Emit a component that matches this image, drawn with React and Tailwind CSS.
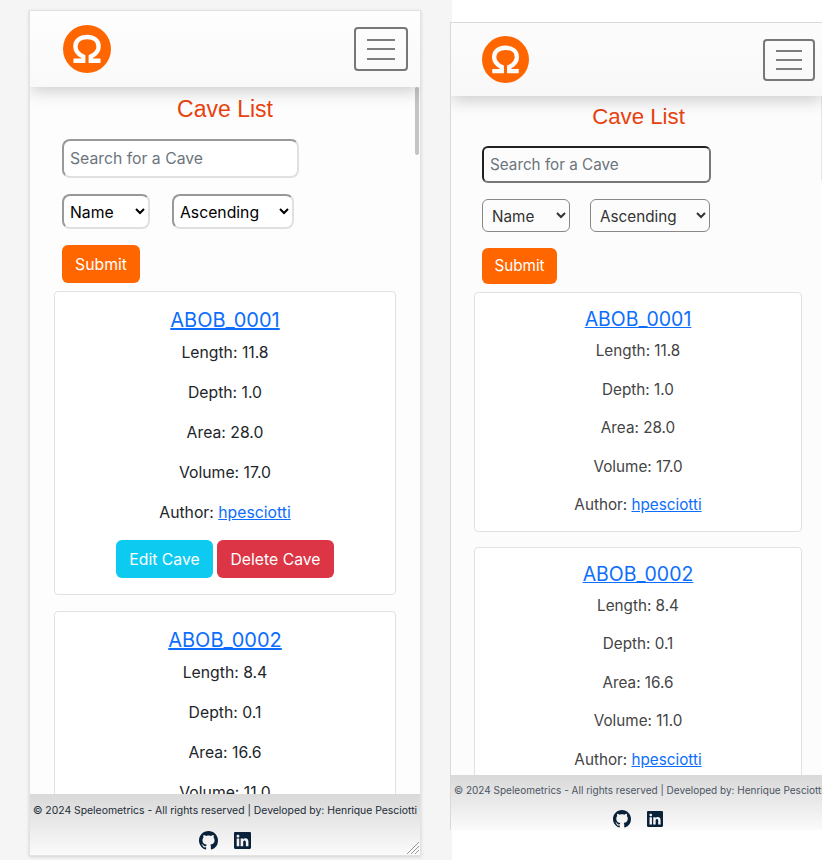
import React from "react";
import { BsGithub, BsLinkedin } from "react-icons/bs";

function Logo({ cls }) {
  return (
    <svg className={cls} viewBox="0 0 48 48" aria-label="Logo">
      <circle cx="24" cy="24" r="24" fill="#ff6600" />
      <path
        d="M10.5 35.8H20.2V31.6C14.8 29 12.4 25.4 12.4 21.4C12.4 15.6 17.2 12 24 12C30.8 12 35.6 15.6 35.6 21.4C35.6 25.4 33.2 29 27.8 31.6V35.8H37.5"
        fill="none"
        stroke="#ffffff"
        strokeWidth="4.4"
      />
    </svg>
  );
}

function Burger({ cls, lines }) {
  return (
    <div className={`flex flex-col items-center justify-center rounded-[4px] border-2 border-[#777777] ${cls}`}>
      <span className={`block h-[2px] bg-[#7d7d7d] ${lines}`} />
      <span className={`block h-[2px] bg-[#7d7d7d] ${lines}`} />
      <span className={`block h-[2px] bg-[#7d7d7d] ${lines}`} />
    </div>
  );
}

function Stats({ c, p }) {
  return (
    <>
      <p className={p}>Length: {c.length}</p>
      <p className={p}>Depth: {c.depth}</p>
      <p className={p}>Area: {c.area}</p>
      <p className={p}>Volume: {c.volume}</p>
      <p className={p}>
        Author: <a href="#" className="text-[#0d6efd] underline">hpesciotti</a>
      </p>
    </>
  );
}

const caves = [
  { name: "ABOB_0001", length: "11.8", depth: "1.0", area: "28.0", volume: "17.0" },
  { name: "ABOB_0002", length: "8.4", depth: "0.1", area: "16.6", volume: "11.0" },
];

export default function App() {
  return (
    <div className="flex w-[834px] h-[860px] overflow-hidden bg-white font-['Inter',sans-serif]">
      {/* Left phone preview */}
      <div className="w-[452px] h-[860px] shrink-0 bg-[#f5f5f5] pl-[29px] pt-[10px]">
        <div className="relative flex flex-col w-[392px] h-[846px] overflow-hidden bg-[#fdfdfd] border border-[#e2e2e2] shadow-[0_1px_3px_rgba(0,0,0,0.15)]">
          <header className="relative z-10 flex h-[76px] shrink-0 items-center justify-between pl-[33px] pr-[12px] bg-gradient-to-b from-[#fefefe] to-[#f9f9f9] shadow-[0_4px_16px_rgba(0,0,0,0.2)]">
            <Logo cls="w-[48px] h-[48px]" />
            <Burger cls="w-[54px] h-[44px] gap-[7.5px]" lines="w-[28px]" />
          </header>
          <main className="relative flex-1 min-h-0 overflow-hidden">
            <div className="absolute right-[1px] top-0 w-[4px] h-[68px] rounded-full bg-[#c4c4c4]" />
            <h1 className="mt-[8px] h-[28px] text-center text-[23px] leading-[28px] text-[#e8410f] font-['Liberation_Sans',sans-serif]">Cave List</h1>
            <div className="pl-[32px] mt-[16px]">
              <input readOnly placeholder="Search for a Cave" className="block w-[237px] h-[39px] rounded-[8px] border-2 border-t-[#999999] border-l-[#999999] border-r-[#e0e0e0] border-b-[#e0e0e0] px-[6px] text-[15.75px] bg-white placeholder:text-[#6c757d]" />
              <div className="flex gap-[22px] mt-[16px]">
                <select className="w-[88px] h-[35px] rounded-[8px] border-2 border-t-[#999999] border-l-[#999999] border-r-[#e0e0e0] border-b-[#e0e0e0] bg-white text-[15.75px] text-black pl-[2px] pt-[2px]"><option>Name</option></select>
                <select className="w-[122px] h-[35px] rounded-[8px] border-2 border-t-[#999999] border-l-[#999999] border-r-[#e0e0e0] border-b-[#e0e0e0] bg-white text-[15.75px] text-black pl-[2px] pt-[2px]"><option>Ascending</option></select>
              </div>
              <button className="block mt-[16px] w-[78px] h-[38px] pt-[2px] rounded-[6px] bg-[#ff6600] text-white text-[15.75px]">Submit</button>
            </div>
            <div className="px-[24px] mt-[8px]">
              {caves.map((c, i) => (
                <div key={c.name} className="mb-[16px] w-[342px] rounded-[4px] border border-[#dee2e6] bg-white text-center pt-[14px] pb-[16px] text-[#212529]">
                  <a href="#" className="block text-[20px] leading-[28px] mb-[7px] text-[#0d6efd] underline">{c.name}</a>
                  <Stats c={c} p="text-[15.75px] leading-[24px] mb-[16px] last-of-type:mb-[15px]" />
                  {i === 0 && (
                    <div className="flex justify-center gap-[4px]">
                      <button className="w-[97px] h-[38px] pt-[2px] rounded-[6px] bg-[#0dcaf0] text-white text-[15.75px]">Edit Cave</button>
                      <button className="w-[117px] h-[38px] pt-[2px] rounded-[6px] bg-[#dc3545] text-white text-[15.75px]">Delete Cave</button>
                    </div>
                  )}
                </div>
              ))}
            </div>
          </main>
          <footer className="relative flex h-[61px] shrink-0 flex-col items-center bg-gradient-to-b from-[#d9d9d9] to-[#fbfbfb]">
            <p className="mt-[9px] h-[16px] whitespace-nowrap text-[10.4px] leading-[16px] text-[#212b36]">© 2024 Speleometrics - All rights reserved | Developed by: Henrique Pesciotti</p>
            <div className="flex items-center gap-[16px] mt-[12px] text-[#0a2239]">
              <BsGithub size={19} />
              <BsLinkedin size={17} />
            </div>
            <svg className="absolute right-[1px] bottom-[1px]" width="13" height="13" viewBox="0 0 13 13">
              <path d="M13 1 1 13M13 5 5 13M13 9 9 13" stroke="#9a9a9a" strokeWidth="1" fill="none" />
            </svg>
          </footer>
        </div>
      </div>

      {/* Right phone preview */}
      <div className="flex-1 bg-white pt-[22px]">
        <div className="relative -ml-[2px] flex flex-col w-[372px] h-[808px] overflow-hidden bg-[#fcfcfc] border-t border-l border-[#d9d9d9]">
          <header className="relative z-10 flex h-[73px] shrink-0 items-center justify-between pl-[31px] pr-[7px] bg-gradient-to-b from-[#fcfcfc] to-[#f8f8f8] shadow-[0_4px_16px_rgba(0,0,0,0.2)]">
            <Logo cls="w-[47px] h-[47px]" />
            <Burger cls="w-[52px] h-[42px] gap-[7px]" lines="w-[26px]" />
          </header>
          <main className="relative flex-1 min-h-0 overflow-hidden">
            <div className="absolute right-0 top-0 w-[1px] h-[84px] bg-[#e6e6e6]" />
            <h1 className="mt-[7px] h-[27px] text-center text-[22.25px] leading-[27px] text-[#e8410f] font-['Liberation_Sans',sans-serif] translate-x-[2px]">Cave List</h1>
            <div className="pl-[31px] mt-[16px]">
              <input readOnly placeholder="Search for a Cave" className="block w-[229px] h-[37px] rounded-[6px] border-2 border-t-[#222222] border-l-[#222222] border-r-[#777777] border-b-[#777777] px-[6px] text-[15.25px] bg-[#fcfcfc] placeholder:text-[#6c757d]" />
              <div className="flex gap-[20px] mt-[16px]">
                <select className="w-[88px] h-[33px] rounded-[6px] border border-[#888888] bg-[#fcfcfc] text-[15.25px] text-[#333333] pl-[5px] pt-[1px]"><option>Name</option></select>
                <select className="w-[120px] h-[33px] rounded-[6px] border border-[#888888] bg-[#fcfcfc] text-[15.25px] text-[#333333] pl-[5px] pt-[1px]"><option>Ascending</option></select>
              </div>
              <button className="block mt-[16px] w-[75px] h-[36px] rounded-[6px] bg-[#ff6600] text-white text-[15.25px]">Submit</button>
            </div>
            <div className="px-[23px] mt-[8px]">
              {caves.map((c) => (
                <div key={c.name} className="mb-[15px] w-[328px] rounded-[4px] border border-[#dee2e6] bg-white text-center pt-[13px] text-[#444444]">
                  <a href="#" className="block text-[19.5px] leading-[27px] mb-[6px] text-[#0d6efd] underline">{c.name}</a>
                  <Stats c={c} p="text-[15.25px] leading-[23px] mb-[15.5px] last-of-type:mb-[14.5px]" />
                </div>
              ))}
            </div>
          </main>
          <footer className="flex h-[55px] shrink-0 flex-col items-center bg-gradient-to-b from-[#d9d9d9] to-[#fbfbfb]">
            <p className="mt-[7px] h-[16px] w-full pl-[3px] overflow-hidden whitespace-nowrap text-[10px] leading-[16px] text-[#4b5563]">© 2024 Speleometrics - All rights reserved | Developed by: Henrique Pesciotti</p>
            <div className="flex items-center gap-[16px] mt-[12px] text-[#0a2239] translate-x-[1px]">
              <BsGithub size={18} />
              <BsLinkedin size={16} />
            </div>
          </footer>
        </div>
      </div>
    </div>
  );
}
